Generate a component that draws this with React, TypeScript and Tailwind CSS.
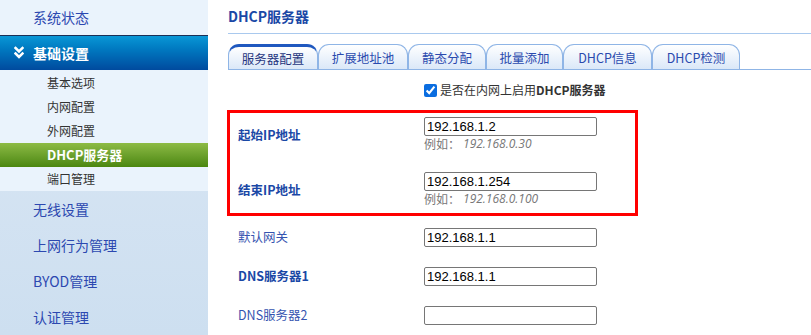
import React from 'react'

const cjk = "font-['Noto_Sans_CJK_SC','Noto_Sans',sans-serif]"

const subItems = ['基本选项', '内网配置', '外网配置', 'DHCP服务器', '端口管理']
const lowerItems = ['无线设置', '上网行为管理', 'BYOD管理', '认证管理']

const tabs = [
  { label: '服务器配置', w: 'w-[90px]', active: true },
  { label: '扩展地址池', w: 'w-[90px]' },
  { label: '静态分配', w: 'w-[78px]' },
  { label: '批量添加', w: 'w-[77px]' },
  { label: 'DHCP信息', w: 'w-[89px]' },
  { label: 'DHCP检测', w: 'w-[88px]' },
]

function Sidebar() {
  return (
    <div className="w-[208px] shrink-0 flex flex-col bg-gradient-to-b from-[#dce8f5] to-[#cddff0]">
      <div className="bg-[#eaf3fc]">
        <div className="h-[35px] flex items-center pl-[33px] text-[14px] text-[#2c48b0]">系统状态</div>
      </div>
      <div className="h-[35px] border-t border-[#1b2f55] bg-gradient-to-b from-[#0b97d6] to-[#004a9e] flex items-center text-white">
        <svg viewBox="0 0 10 14" className="w-[10px] h-[14px] ml-[14px] mr-[9px]" fill="none" stroke="white" strokeWidth="2.6" strokeLinecap="square">
          <polyline points="1.5,2 5,5.5 8.5,2" />
          <polyline points="1.5,7.5 5,11 8.5,7.5" />
        </svg>
        <span className="text-[14px] font-bold">基础设置</span>
      </div>
      <div className="bg-[#eaf3fc] pt-px">
        {subItems.map((s) =>
          s === 'DHCP服务器' ? (
            <div key={s} className="h-[24px] flex items-center pl-[47px] text-[13px] font-bold text-white bg-gradient-to-b from-[#8dbb44] to-[#4b870e]">
              {s}
            </div>
          ) : (
            <div key={s} className="h-[24px] flex items-center pl-[47px] text-[12px] text-[#333]">
              {s}
            </div>
          )
        )}
      </div>
      <div>
        {lowerItems.map((s) => (
          <div key={s} className="h-[36px] flex items-center pl-[33px] text-[14px] text-[#2c48b0]">
            {s}
          </div>
        ))}
      </div>
    </div>
  )
}

function Field({ value }: { value: string }) {
  return (
    <div className="w-[173px] h-[19px] border border-[#767676] rounded-[2px] bg-white flex items-center px-[2px] font-['Liberation_Sans',sans-serif] text-[13px] text-black leading-none">
      {value}
    </div>
  )
}

function Hint({ ex }: { ex: string }) {
  return (
    <div className="h-[14px] flex items-center text-[12px] text-[#777] leading-none mt-px">
      例如：<span className="italic ml-[3px] font-['Open_Sans',sans-serif]">{ex}</span>
    </div>
  )
}

export default function App() {
  return (
    <div className={`w-[811px] h-[335px] overflow-hidden flex bg-white ${cjk}`}>
      <Sidebar />
      <div className="flex-1 pl-[20px]">
        <div className="h-[34px] flex items-center text-[14px] font-bold text-[#1a48a6] border-b border-[#a9c9ee]">DHCP服务器</div>
        <div className="mt-[11px] h-[25px] flex items-end border-b border-[#8fb5e6]">
          {tabs.map((t) => (
            <div
              key={t.label}
              className={`${t.w} h-[25px] rounded-t-[11px] border border-b-0 border-[#8fb5e6] bg-gradient-to-b from-white to-[#dbe8f8] flex items-center justify-center pt-[3px] text-[12.5px] ${
                t.active ? 'border-t-[3px] border-t-[#1f58bf] text-[#26367e]' : 'text-[#2a4aae]'
              }`}
            >
              {t.label}
            </div>
          ))}
        </div>
        <div className="h-[40px] flex items-center pl-[196px] text-[#333]">
          <input type="checkbox" checked readOnly className="w-[13px] h-[13px] m-0 mr-[3px] accent-[#0a6de0]" />
          <span className="text-[12px]">是否在内网上启用</span>
          <span className="text-[12px] font-bold">DHCP服务器</span>
        </div>
        <div className="w-[411px] -ml-[1px] border-[3px] border-[#ff0000] pt-[4px] pb-[4px]">
          <div className="h-[55px] flex">
            <div className="w-[194px] pl-[8px] h-[36px] flex items-center text-[12.5px] font-bold text-[#1a48a6]">起始IP地址</div>
            <div>
              <Field value="192.168.1.2" />
              <Hint ex="192.168.0.30" />
            </div>
          </div>
          <div className="flex">
            <div className="w-[194px] pl-[8px] h-[37px] flex items-center text-[12.5px] font-bold text-[#1a48a6]">结束IP地址</div>
            <div>
              <Field value="192.168.1.254" />
              <Hint ex="192.168.0.100" />
            </div>
          </div>
        </div>
        <div className="mt-[12px] flex flex-col gap-[20px]">
          <div className="h-[19px] flex items-center">
            <div className="w-[196px] pl-[10px] text-[12.5px] text-[#3554b0]">默认网关</div>
            <Field value="192.168.1.1" />
          </div>
          <div className="h-[19px] flex items-center">
            <div className="w-[196px] pl-[10px] text-[12.5px] font-bold text-[#1a48a6]">DNS服务器1</div>
            <Field value="192.168.1.1" />
          </div>
          <div className="h-[19px] flex items-center">
            <div className="w-[196px] pl-[10px] text-[12.5px] text-[#3554b0]">DNS服务器2</div>
            <Field value="" />
          </div>
        </div>
      </div>
    </div>
  )
}
